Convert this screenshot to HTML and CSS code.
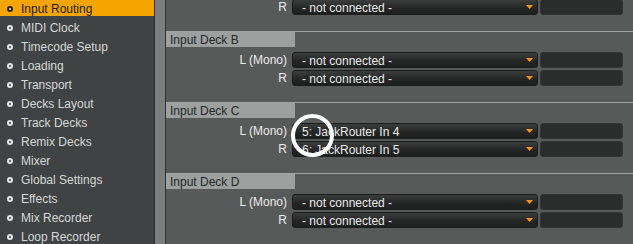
FILE: index.html
```html
<!DOCTYPE html>
<html>
<head>
<meta charset="utf-8">
<link rel="stylesheet" href="styles.css">
</head>
<body>
<div class="app">
  <nav class="sidebar">
    <div class="item active"><span class="dot"></span>Input Routing</div>
    <div class="item"><span class="dot"></span>MIDI Clock</div>
    <div class="item"><span class="dot"></span>Timecode Setup</div>
    <div class="item"><span class="dot"></span>Loading</div>
    <div class="item"><span class="dot"></span>Transport</div>
    <div class="item"><span class="dot"></span>Decks Layout</div>
    <div class="item"><span class="dot"></span>Track Decks</div>
    <div class="item"><span class="dot"></span>Remix Decks</div>
    <div class="item"><span class="dot"></span>Mixer</div>
    <div class="item"><span class="dot"></span>Global Settings</div>
    <div class="item"><span class="dot"></span>Effects</div>
    <div class="item"><span class="dot"></span>Mix Recorder</div>
    <div class="item"><span class="dot"></span>Loop Recorder</div>
  </nav>
  <div class="scrollbar"></div>
  <main class="content">
    <section class="section first">
      <div class="row">
        <span class="label">R</span>
        <div class="select"><span>- not connected -</span><svg class="arrow" width="7" height="4" viewBox="0 0 7 4"><polygon points="0,0 7,0 3.5,4" fill="#f7931e"/></svg></div>
        <div class="box"></div>
      </div>
    </section>
    <section class="section">
      <div class="header"><div class="title">Input Deck B</div></div>
      <div class="row">
        <span class="label">L (Mono)</span>
        <div class="select"><span>- not connected -</span><svg class="arrow" width="7" height="4" viewBox="0 0 7 4"><polygon points="0,0 7,0 3.5,4" fill="#f7931e"/></svg></div>
        <div class="box"></div>
      </div>
      <div class="row">
        <span class="label">R</span>
        <div class="select"><span>- not connected -</span><svg class="arrow" width="7" height="4" viewBox="0 0 7 4"><polygon points="0,0 7,0 3.5,4" fill="#f7931e"/></svg></div>
        <div class="box"></div>
      </div>
    </section>
    <section class="section">
      <div class="header"><div class="title">Input Deck C</div></div>
      <div class="row">
        <span class="label">L (Mono)</span>
        <div class="select"><span>5: JackRouter In 4</span><svg class="arrow" width="7" height="4" viewBox="0 0 7 4"><polygon points="0,0 7,0 3.5,4" fill="#f7931e"/></svg></div>
        <div class="box"></div>
      </div>
      <div class="row">
        <span class="label">R</span>
        <div class="select"><span>6: JackRouter In 5</span><svg class="arrow" width="7" height="4" viewBox="0 0 7 4"><polygon points="0,0 7,0 3.5,4" fill="#f7931e"/></svg></div>
        <div class="box"></div>
      </div>
    </section>
    <section class="section">
      <div class="header"><div class="title">Input Deck D</div></div>
      <div class="row">
        <span class="label">L (Mono)</span>
        <div class="select"><span>- not connected -</span><svg class="arrow" width="7" height="4" viewBox="0 0 7 4"><polygon points="0,0 7,0 3.5,4" fill="#f7931e"/></svg></div>
        <div class="box"></div>
      </div>
      <div class="row">
        <span class="label">R</span>
        <div class="select"><span>- not connected -</span><svg class="arrow" width="7" height="4" viewBox="0 0 7 4"><polygon points="0,0 7,0 3.5,4" fill="#f7931e"/></svg></div>
        <div class="box"></div>
      </div>
    </section>
  </main>
  <div class="highlight-ring"></div>
</div>
</body>
</html>
```
FILE: styles.css
```css
html, body {
  margin: 0;
  padding: 0;
  width: 633px;
  height: 244px;
  overflow: hidden;
  background: #585a59;
}
.app {
  position: relative;
  display: flex;
  width: 633px;
  height: 244px;
  overflow: hidden;
  font-family: "Liberation Sans", Arial, sans-serif;
  font-size: 12px;
}
.sidebar {
  width: 154px;
  flex: none;
  background: #3f4343;
  border-right: 1px solid #2b2e2e;
  display: flex;
  flex-direction: column;
  gap: 3px;
}
.item {
  height: 16px;
  line-height: 18px;
  display: flex;
  align-items: flex-start;
  color: #d6d8d8;
  padding-left: 7px;
  white-space: nowrap;
}
.item.active {
  background: #f6a400;
  color: #1d1d1d;
}
.dot {
  width: 2px;
  height: 2px;
  border: 2px solid #e4e6e6;
  border-radius: 50%;
  margin-top: 6px;
  margin-right: 8px;
  flex: none;
}
.item.active .dot {
  border-color: #222;
  background: #fff3d6;
}
.scrollbar {
  width: 10px;
  flex: none;
  background: #7b807f;
  border-right: 1px solid #2f3232;
}
.content {
  flex: 1;
  background: #585a59;
  display: flex;
  flex-direction: column;
  padding-right: 5px;
}
.section {
  display: flex;
  flex-direction: column;
  gap: 2px;
  margin-bottom: 16px;
}
.section.first {
  margin-top: -1px;
}
.header {
  border-top: 1px solid #9fa3a2;
  height: 15px;
  margin-right: -5px;
  margin-bottom: 3px;
}
.title {
  width: 125px;
  height: 15px;
  line-height: 16px;
  padding-left: 4px;
  background: #9ca09f;
  color: #262828;
}
.row {
  display: grid;
  grid-template-columns: 126px 246px 83px;
  column-gap: 0;
  height: 16px;
}
.label {
  text-align: right;
  color: #eaebeb;
  line-height: 16px;
  padding-right: 5px;
}
.select {
  margin-left: 0;
  width: 246px;
  box-sizing: border-box;
  height: 16px;
  border: 1px solid #1b1d1d;
  border-radius: 3px;
  background: linear-gradient(#3c3e3e, #232525 60%, #1e2020);
  color: #e9eaea;
  display: flex;
  align-items: center;
  justify-content: space-between;
  padding: 0 4px 0 9px;
  line-height: 14px;
}
.select span {
  padding-top: 1px;
}
.box {
  margin-left: 2px;
  width: 83px;
  box-sizing: border-box;
  height: 16px;
  background: #2b2d2d;
  border: 1px solid #333535;
  border-radius: 3px;
}
.row .label { width: 126px; box-sizing: border-box; }
.highlight-ring {
  position: absolute;
  left: 291px;
  top: 114px;
  width: 35px;
  height: 35px;
  border: 4.5px solid #ffffff;
  border-radius: 50%;
}
```
